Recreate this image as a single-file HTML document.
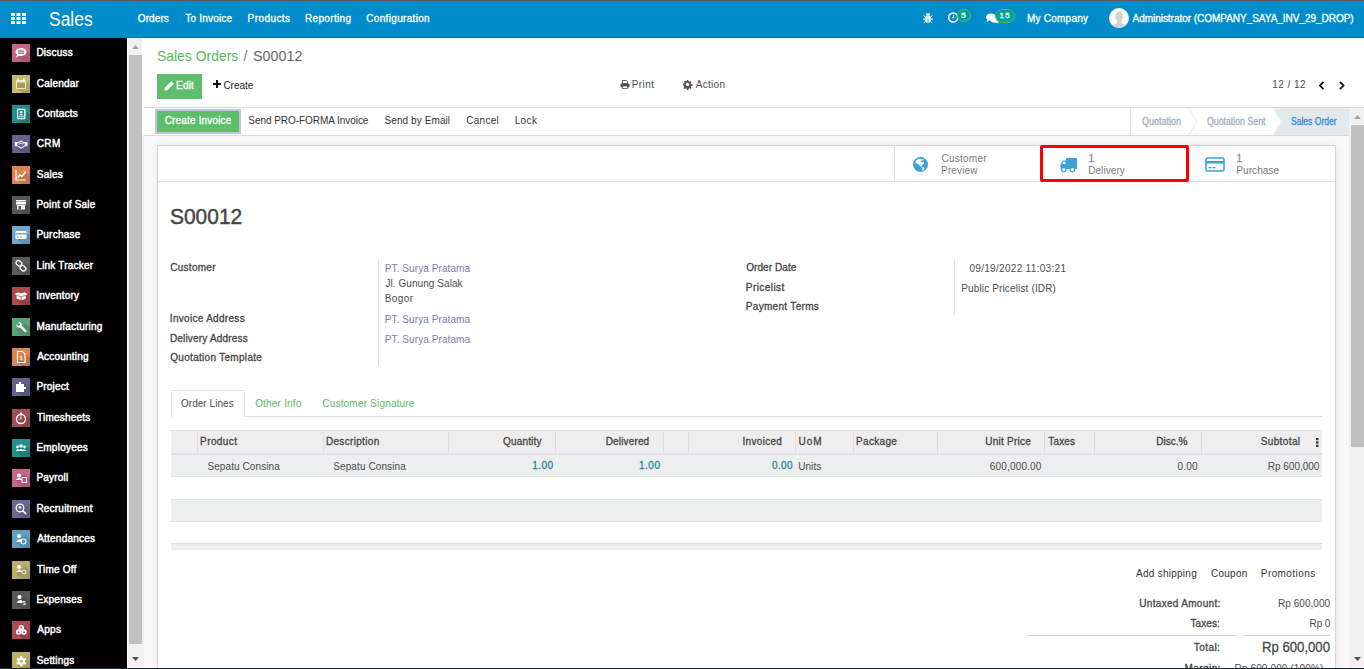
<!DOCTYPE html><html><head><meta charset="utf-8"><style>
*{margin:0;padding:0;box-sizing:border-box}
html,body{width:1364px;height:669px;overflow:hidden;background:#f9f9f9;font-family:"Liberation Sans",sans-serif}
.t{position:absolute;white-space:nowrap;line-height:1}
.r{position:absolute}
svg{position:absolute;overflow:visible}
</style></head><body>
<div class="r" style="left:0px;top:0px;width:1364px;height:1px;background:#5b5b5b;"></div>
<div class="r" style="left:0px;top:1px;width:1364px;height:36px;background:#008ccb;"></div>
<div class="r" style="left:0px;top:37px;width:1364px;height:1px;background:#5a5396;"></div>
<div class="r" style="left:0px;top:38px;width:127px;height:631px;background:#000;"></div>
<div class="r" style="left:127px;top:38px;width:1px;height:631px;background:#fafafa;"></div>
<div class="r" style="left:128px;top:38px;width:16px;height:631px;background:#f1f1f1;"></div>
<div class="r" style="left:129px;top:55px;width:13px;height:589px;background:#c1c1c1;"></div>
<svg style="left:131px;top:44px" width="9" height="6"><path d="M1 5 L4.5 1 L8 5 Z" fill="#a3a3a3"/></svg>
<svg style="left:131px;top:656px" width="9" height="6"><path d="M1 1 L4.5 5 L8 1 Z" fill="#505050"/></svg>
<div class="r" style="left:142px;top:38px;width:1222px;height:70px;background:#fff;"></div>
<div class="r" style="left:144px;top:107px;width:1220px;height:1px;background:#d9d9d9;"></div>
<div class="r" style="left:142px;top:108px;width:1207px;height:27px;background:#fff;"></div>
<div class="r" style="left:144px;top:135px;width:1205px;height:1px;background:#d4dbe3;"></div>
<div class="r" style="left:1349px;top:108px;width:15px;height:560px;background:#f1f1f1;"></div>
<div class="r" style="left:1351px;top:125px;width:13px;height:322px;background:#c1c1c1;"></div>
<svg style="left:1353px;top:114px" width="9" height="6"><path d="M1 5 L4.5 1 L8 5 Z" fill="#a3a3a3"/></svg>
<svg style="left:1353px;top:656px" width="9" height="6"><path d="M1 1 L4.5 5 L8 1 Z" fill="#505050"/></svg>
<svg style="left:11px;top:13px" width="15" height="11"><rect x="0.0" y="0" width="4" height="3" fill="#fff"/><rect x="5.5" y="0" width="4" height="3" fill="#fff"/><rect x="11.0" y="0" width="4" height="3" fill="#fff"/><rect x="0.0" y="4" width="4" height="3" fill="#fff"/><rect x="5.5" y="4" width="4" height="3" fill="#fff"/><rect x="11.0" y="4" width="4" height="3" fill="#fff"/><rect x="0.0" y="8" width="4" height="3" fill="#fff"/><rect x="5.5" y="8" width="4" height="3" fill="#fff"/><rect x="11.0" y="8" width="4" height="3" fill="#fff"/></svg>
<div class="t" style="left:49.20px;top:10.00px;font-size:19.5px;color:#fff;transform:scaleX(0.8941);transform-origin:0 0;">Sales</div>
<div class="t" style="left:137.75px;top:14.00px;font-size:10px;color:#fff;letter-spacing:0.110px;-webkit-text-stroke:0.3px #fff;">Orders</div>
<div class="t" style="left:185.30px;top:14.00px;font-size:10px;color:#fff;letter-spacing:0.200px;-webkit-text-stroke:0.3px #fff;">To Invoice</div>
<div class="t" style="left:247.60px;top:14.00px;font-size:10px;color:#fff;letter-spacing:0.429px;-webkit-text-stroke:0.3px #fff;">Products</div>
<div class="t" style="left:305.00px;top:14.00px;font-size:10px;color:#fff;letter-spacing:0.331px;-webkit-text-stroke:0.3px #fff;">Reporting</div>
<div class="t" style="left:366.30px;top:14.00px;font-size:10px;color:#fff;letter-spacing:0.321px;-webkit-text-stroke:0.3px #fff;">Configuration</div>
<svg style="left:923px;top:13px" width="10" height="10" viewBox="0 0 10 10"><g fill="#fff"><rect x="3" y="0.3" width="4" height="2.4" rx="1"/><rect x="2.2" y="3" width="5.6" height="6.5" rx="1.4"/></g><path d="M2.6 4 L0.6 2.4M7.4 4 L9.4 2.4M2.2 6.2H0M7.8 6.2H10M2.6 8.4 L0.8 9.8M7.4 8.4 L9.2 9.8" stroke="#fff" stroke-width="1"/><path d="M5 4.2v4.8" stroke="#008ccb" stroke-width=".7"/></svg>
<svg style="left:948px;top:12px" width="11" height="11" viewBox="0 0 11 11"><circle cx="5.2" cy="5.5" r="4.5" fill="none" stroke="#fff" stroke-width="1.5"/><path d="M5.6 2.8v3H4.2" fill="none" stroke="#fff" stroke-width="1"/></svg>
<div class="r" style="left:957px;top:9px;width:14px;height:13px;border-radius:7px;background:#00a09d;border:1px solid #5cb85c"></div>
<div class="t" style="left:961.20px;top:12.00px;font-size:8px;color:#fff;-webkit-text-stroke:0.3px #fff;">5</div>
<svg style="left:986px;top:12.5px" width="14" height="11" viewBox="0 0 14 11"><ellipse cx="5" cy="4" rx="5" ry="3.6" fill="#fff"/><path d="M1.5 6 L0.5 9 L4 7 Z" fill="#fff"/><ellipse cx="9" cy="6.5" rx="4.5" ry="3.2" fill="#fff"/><path d="M11.5 8.5 L13 10.5 L9.5 9 Z" fill="#fff"/></svg>
<div class="r" style="left:995px;top:9px;width:20px;height:14px;border-radius:7px;background:#00a09d;border:1px solid #5cb85c"></div>
<div class="t" style="left:999.40px;top:12.00px;font-size:8px;color:#fff;letter-spacing:1.500px;-webkit-text-stroke:0.3px #fff;">15</div>
<div class="t" style="left:1026.90px;top:14.00px;font-size:10px;color:#fff;letter-spacing:0.244px;-webkit-text-stroke:0.3px #fff;">My Company</div>
<svg style="left:1109px;top:8px" width="20" height="20" viewBox="0 0 20 20"><circle cx="10" cy="10" r="10" fill="#fcfcfc"/><clipPath id="av"><circle cx="10" cy="10" r="10"/></clipPath><g clip-path="url(#av)" fill="#d3d3d3"><ellipse cx="10.2" cy="8.2" rx="3.9" ry="4.9"/><rect x="8" y="11" width="4.4" height="5"/><ellipse cx="10.2" cy="19.8" rx="7.5" ry="4.6"/></g></svg>
<div class="t" style="left:1132.50px;top:14.00px;font-size:10px;color:#fff;letter-spacing:-0.029px;-webkit-text-stroke:0.3px #fff;">Administrator (COMPANY_SAYA_INV_29_DROP)</div>
<svg style="left:12px;top:44px" width="18" height="18" viewBox="0 0 18 18"><rect width="18" height="18" fill="#c86584"/><path d="M4 12 L10 18 H18 V10 L13 5Z" fill="#000" opacity=".12"/><ellipse cx="9" cy="8" rx="5.5" ry="4" fill="#fff"/><path d="M5 10.5 L4 13.5 L8 11.5Z" fill="#fff"/><rect x="6" y="6.5" width="6" height="1.1" fill="#9a4560"/><rect x="6" y="8.6" width="6" height="1.1" fill="#9a4560"/></svg>
<div class="t" style="left:36.40px;top:48.00px;font-size:10px;color:#fff;letter-spacing:0.226px;-webkit-text-stroke:0.45px #fff;">Discuss</div>
<svg style="left:12px;top:75px" width="18" height="18" viewBox="0 0 18 18"><rect width="18" height="18" fill="#c6b868"/><path d="M4 12 L10 18 H18 V10 L13 5Z" fill="#000" opacity=".12"/><rect x="4" y="5" width="10" height="9" rx="1" fill="#eee8c8"/><rect x="5" y="7.5" width="8" height="5.5" fill="#a89e60"/><rect x="5.5" y="3.5" width="1.5" height="2.5" fill="#fff"/><rect x="11" y="3.5" width="1.5" height="2.5" fill="#fff"/></svg>
<div class="t" style="left:36.70px;top:79.00px;font-size:10px;color:#fff;letter-spacing:0.228px;-webkit-text-stroke:0.45px #fff;">Calendar</div>
<svg style="left:12px;top:105px" width="18" height="18" viewBox="0 0 18 18"><rect width="18" height="18" fill="#21908a"/><path d="M4 12 L10 18 H18 V10 L13 5Z" fill="#000" opacity=".12"/><rect x="5.6" y="4.3" width="7.2" height="9.3" rx=".6" fill="none" stroke="#fff" stroke-width="1.2"/><circle cx="9.2" cy="7.2" r="1.3" fill="#fff"/><path d="M7 10.2 Q9.2 8 11.4 10.2Z" fill="#fff"/><rect x="6.5" y="11.3" width="5.5" height=".9" fill="#fff"/><path d="M13.3 6h.9M13.3 8h.9M13.3 10h.9" stroke="#fff" stroke-width=".7"/></svg>
<div class="t" style="left:36.70px;top:109.00px;font-size:10px;color:#fff;letter-spacing:0.221px;-webkit-text-stroke:0.45px #fff;">Contacts</div>
<svg style="left:12px;top:135px" width="18" height="18" viewBox="0 0 18 18"><rect width="18" height="18" fill="#64638f"/><path d="M4 12 L10 18 H18 V10 L13 5Z" fill="#000" opacity=".12"/><path d="M2.8 7h3.4l2.9-1.6 2.9 1.6h3.4v4.2h-2.3l-4 2.5-4-2.5H2.8z" fill="#fff"/><path d="M5.4 8.2l3.7-1.6 3.7 1.6v2.2l-3.7 2.2-3.7-2.2z" fill="#64638f"/><path d="M6.8 9.2l2.2-1.4 1.4 1.2 1.5-.9" stroke="#fff" stroke-width=".9" fill="none"/></svg>
<div class="t" style="left:36.70px;top:139.00px;font-size:10px;color:#fff;letter-spacing:0.429px;-webkit-text-stroke:0.45px #fff;">CRM</div>
<svg style="left:12px;top:166px" width="18" height="18" viewBox="0 0 18 18"><rect width="18" height="18" fill="#df8451"/><path d="M4 12 L10 18 H18 V10 L13 5Z" fill="#000" opacity=".12"/><path d="M4 4v10h10" stroke="#fff" stroke-width="1.2" fill="none"/><path d="M5.5 12 L8 9 L10 10.5 L13 6.5" stroke="#fff" stroke-width="1.5" fill="none"/><path d="M11.5 5.5h2.5v2.5Z" fill="#fff"/></svg>
<div class="t" style="left:36.75px;top:170.00px;font-size:10px;color:#fff;letter-spacing:0.242px;-webkit-text-stroke:0.45px #fff;">Sales</div>
<svg style="left:12px;top:196px" width="18" height="18" viewBox="0 0 18 18"><rect width="18" height="18" fill="#575757"/><path d="M4 12 L10 18 H18 V10 L13 5Z" fill="#000" opacity=".12"/><rect x="4" y="4" width="10" height="1.5" fill="#fff"/><path d="M4 6h10v2.5H4z" fill="#fff"/><rect x="5" y="9" width="8" height="4.5" fill="#fff"/><rect x="6.5" y="10" width="2.5" height="3.5" fill="#575757"/></svg>
<div class="t" style="left:36.40px;top:200.00px;font-size:10px;color:#fff;letter-spacing:0.185px;-webkit-text-stroke:0.45px #fff;">Point of Sale</div>
<svg style="left:12px;top:226px" width="18" height="18" viewBox="0 0 18 18"><rect width="18" height="18" fill="#6ea8cc"/><path d="M4 12 L10 18 H18 V10 L13 5Z" fill="#000" opacity=".12"/><rect x="3.5" y="5" width="11" height="8" rx="1" fill="#fff"/><rect x="3.5" y="7" width="11" height="1.5" fill="#6ea8cc"/><rect x="5" y="10.5" width="2" height="1" fill="#6ea8cc"/><rect x="8" y="10.5" width="2" height="1" fill="#6ea8cc"/></svg>
<div class="t" style="left:36.40px;top:230.00px;font-size:10px;color:#fff;letter-spacing:0.235px;-webkit-text-stroke:0.45px #fff;">Purchase</div>
<svg style="left:12px;top:257px" width="18" height="18" viewBox="0 0 18 18"><rect width="18" height="18" fill="#5a5a5a"/><path d="M4 12 L10 18 H18 V10 L13 5Z" fill="#000" opacity=".12"/><rect x="4" y="4" width="6" height="4.5" rx="2.2" transform="rotate(40 7 6.2)" fill="none" stroke="#fff" stroke-width="1.3"/><rect x="8" y="9" width="6" height="4.5" rx="2.2" transform="rotate(40 11 11.2)" fill="none" stroke="#fff" stroke-width="1.3"/></svg>
<div class="t" style="left:36.40px;top:261.00px;font-size:10px;color:#fff;letter-spacing:0.195px;-webkit-text-stroke:0.45px #fff;">Link Tracker</div>
<svg style="left:12px;top:287px" width="18" height="18" viewBox="0 0 18 18"><rect width="18" height="18" fill="#a84b4e"/><path d="M4 12 L10 18 H18 V10 L13 5Z" fill="#000" opacity=".12"/><path d="M2.8 7 L6 5.2 L9.2 6.6 L12.4 5.2 L15.5 7 L13.8 8.4 V11.8 L9.2 13.3 L4.6 11.8 V8.4Z" fill="#fff"/><path d="M4.6 8.4 L9.2 9.6 L13.8 8.4" stroke="#a84b4e" stroke-width=".8" fill="none"/><path d="M9.2 9.6 V13.3" stroke="#a84b4e" stroke-width=".8"/></svg>
<div class="t" style="left:36.30px;top:291.00px;font-size:10px;color:#fff;letter-spacing:0.201px;-webkit-text-stroke:0.45px #fff;">Inventory</div>
<svg style="left:12px;top:318px" width="18" height="18" viewBox="0 0 18 18"><rect width="18" height="18" fill="#5aa27a"/><path d="M4 12 L10 18 H18 V10 L13 5Z" fill="#000" opacity=".12"/><path d="M4.2 6.2 A3.2 3.2 0 0 0 8.2 9.6 L12.6 14 Q13.6 14.6 14.3 13.8 Q14.8 13 14.2 12.3 L9.8 7.8 A3.2 3.2 0 0 0 6.2 4.1 L7.9 5.9 L7.6 7.6 L5.9 7.9Z" fill="#fff"/></svg>
<div class="t" style="left:36.40px;top:322.00px;font-size:10px;color:#fff;letter-spacing:0.207px;-webkit-text-stroke:0.45px #fff;">Manufacturing</div>
<svg style="left:12px;top:348px" width="18" height="18" viewBox="0 0 18 18"><rect width="18" height="18" fill="#db8552"/><path d="M4 12 L10 18 H18 V10 L13 5Z" fill="#000" opacity=".12"/><path d="M5.5 3.5h5l2.5 2.5v8.5h-7.5z" fill="none" stroke="#fff" stroke-width="1.2"/><text x="9.2" y="12.3" font-size="6" fill="#fff" text-anchor="middle" font-family="Liberation Sans">$</text></svg>
<div class="t" style="left:37.20px;top:352.00px;font-size:10px;color:#fff;letter-spacing:0.217px;-webkit-text-stroke:0.45px #fff;">Accounting</div>
<svg style="left:12px;top:378px" width="18" height="18" viewBox="0 0 18 18"><rect width="18" height="18" fill="#62618d"/><path d="M4 12 L10 18 H18 V10 L13 5Z" fill="#000" opacity=".12"/><path d="M4 6h3V4h2v2h3v3h2v2h-2v3H4z" fill="#fff"/></svg>
<div class="t" style="left:36.40px;top:382.00px;font-size:10px;color:#fff;letter-spacing:0.202px;-webkit-text-stroke:0.45px #fff;">Project</div>
<svg style="left:12px;top:409px" width="18" height="18" viewBox="0 0 18 18"><rect width="18" height="18" fill="#9f4f53"/><path d="M4 12 L10 18 H18 V10 L13 5Z" fill="#000" opacity=".12"/><circle cx="9" cy="10" r="4.5" fill="none" stroke="#fff" stroke-width="1.4"/><rect x="8" y="3.5" width="2" height="1.5" fill="#fff"/><path d="M9 10V7.5M9 10h-1.5" stroke="#fff" stroke-width="1"/></svg>
<div class="t" style="left:37.00px;top:413.00px;font-size:10px;color:#fff;letter-spacing:0.226px;-webkit-text-stroke:0.45px #fff;">Timesheets</div>
<svg style="left:12px;top:439px" width="18" height="18" viewBox="0 0 18 18"><rect width="18" height="18" fill="#21928e"/><path d="M4 12 L10 18 H18 V10 L13 5Z" fill="#000" opacity=".12"/><circle cx="9" cy="7" r="1.8" fill="#fff"/><circle cx="5.5" cy="8" r="1.4" fill="#fff"/><circle cx="12.5" cy="8" r="1.4" fill="#fff"/><path d="M3.5 12 Q5.5 9 7.5 11 Q9 8.5 10.5 11 Q12.5 9 14.5 12Z" fill="#fff"/></svg>
<div class="t" style="left:36.40px;top:443.00px;font-size:10px;color:#fff;letter-spacing:0.242px;-webkit-text-stroke:0.45px #fff;">Employees</div>
<svg style="left:12px;top:469px" width="18" height="18" viewBox="0 0 18 18"><rect width="18" height="18" fill="#c8658a"/><path d="M4 12 L10 18 H18 V10 L13 5Z" fill="#000" opacity=".12"/><circle cx="7" cy="6.5" r="2" fill="#fff"/><path d="M3.5 11 Q7 7.5 10 10 V11Z" fill="#fff"/><rect x="10" y="8.5" width="4.5" height="5" fill="none" stroke="#fff" stroke-width="1"/></svg>
<div class="t" style="left:36.40px;top:473.00px;font-size:10px;color:#fff;letter-spacing:0.194px;-webkit-text-stroke:0.45px #fff;">Payroll</div>
<svg style="left:12px;top:500px" width="18" height="18" viewBox="0 0 18 18"><rect width="18" height="18" fill="#6a6992"/><path d="M4 12 L10 18 H18 V10 L13 5Z" fill="#000" opacity=".12"/><circle cx="8" cy="8" r="3.8" fill="none" stroke="#fff" stroke-width="1.3"/><circle cx="8" cy="7.5" r="1.3" fill="#fff"/><path d="M10.5 10.5 L14 14" stroke="#fff" stroke-width="1.6"/></svg>
<div class="t" style="left:36.40px;top:504.00px;font-size:10px;color:#fff;letter-spacing:0.212px;-webkit-text-stroke:0.45px #fff;">Recruitment</div>
<svg style="left:12px;top:530px" width="18" height="18" viewBox="0 0 18 18"><rect width="18" height="18" fill="#5f9fc2"/><path d="M4 12 L10 18 H18 V10 L13 5Z" fill="#000" opacity=".12"/><circle cx="7" cy="6" r="2" fill="#fff"/><path d="M4 12 Q7 7.5 10 10 V12Z" fill="#fff"/><circle cx="11.5" cy="11.5" r="2.5" fill="none" stroke="#fff" stroke-width="1.1"/></svg>
<div class="t" style="left:37.20px;top:534.00px;font-size:10px;color:#fff;letter-spacing:0.221px;-webkit-text-stroke:0.45px #fff;">Attendances</div>
<svg style="left:12px;top:561px" width="18" height="18" viewBox="0 0 18 18"><rect width="18" height="18" fill="#b8ad6c"/><path d="M4 12 L10 18 H18 V10 L13 5Z" fill="#000" opacity=".12"/><circle cx="7" cy="6" r="2" fill="#fff"/><path d="M4 11 Q7 7.5 10 10 V11Z" fill="#fff"/><circle cx="12" cy="11" r="2" fill="none" stroke="#eee" stroke-width="1"/></svg>
<div class="t" style="left:37.00px;top:565.00px;font-size:10px;color:#fff;letter-spacing:0.215px;-webkit-text-stroke:0.45px #fff;">Time Off</div>
<svg style="left:12px;top:591px" width="18" height="18" viewBox="0 0 18 18"><rect width="18" height="18" fill="#595959"/><path d="M4 12 L10 18 H18 V10 L13 5Z" fill="#000" opacity=".12"/><circle cx="7.5" cy="6" r="2" fill="#fff"/><path d="M4.5 12 Q7.5 7.5 10.5 10 V12Z" fill="#fff"/><text x="12.2" y="14" font-size="6" fill="#fff" text-anchor="middle" font-family="Liberation Sans">$</text></svg>
<div class="t" style="left:36.40px;top:595.00px;font-size:10px;color:#fff;letter-spacing:0.244px;-webkit-text-stroke:0.45px #fff;">Expenses</div>
<svg style="left:12px;top:621px" width="18" height="18" viewBox="0 0 18 18"><rect width="18" height="18" fill="#ac4b50"/><path d="M4 12 L10 18 H18 V10 L13 5Z" fill="#000" opacity=".12"/><circle cx="9.3" cy="6.6" r="2.7" fill="#fff"/><circle cx="6.6" cy="11" r="2.7" fill="#fff"/><circle cx="12" cy="11" r="2.7" fill="#fff"/><circle cx="9.3" cy="6.6" r="1" fill="#ac4b50"/><circle cx="6.6" cy="11.2" r="1" fill="#ac4b50"/><circle cx="12" cy="11.2" r="1" fill="#ac4b50"/></svg>
<div class="t" style="left:37.20px;top:625.00px;font-size:10px;color:#fff;letter-spacing:0.299px;-webkit-text-stroke:0.45px #fff;">Apps</div>
<svg style="left:12px;top:652px" width="18" height="18" viewBox="0 0 18 18"><rect width="18" height="18" fill="#bfb061"/><path d="M4 12 L10 18 H18 V10 L13 5Z" fill="#000" opacity=".12"/><g fill="#fff"><circle cx="9.3" cy="9.3" r="3.6"/><rect x="8.2" y="4" width="2.2" height="10.6" rx=".5"/><rect x="8.2" y="4" width="2.2" height="10.6" rx=".5" transform="rotate(60 9.3 9.3)"/><rect x="8.2" y="4" width="2.2" height="10.6" rx=".5" transform="rotate(120 9.3 9.3)"/></g><circle cx="9.3" cy="9.3" r="1.5" fill="#bfb061"/></svg>
<div class="t" style="left:36.75px;top:656.00px;font-size:10px;color:#fff;letter-spacing:0.202px;-webkit-text-stroke:0.45px #fff;">Settings</div>
<div class="t" style="left:156.68px;top:49.00px;font-size:14.5px;color:#5cb85c;transform:scaleX(0.9599);transform-origin:0 0;">Sales Orders</div>
<div class="t" style="left:243.50px;top:49.00px;font-size:14.5px;color:#777;">/</div>
<div class="t" style="left:253.16px;top:49.00px;font-size:14.5px;color:#666;transform:scaleX(0.9908);transform-origin:0 0;">S00012</div>
<div class="r" style="left:157px;top:74px;width:45px;height:25px;background:#5dbe6b;"></div>
<svg style="left:164px;top:80.5px" width="10" height="10" viewBox="0 0 10 10"><path d="M0.3 9.6 L0.6 6.9 L7.3 0.2 L9.8 2.7 L3.1 9.3Z" fill="#fff"/></svg>
<div class="t" style="left:176.00px;top:81.00px;font-size:10px;color:#fff;letter-spacing:0.217px;-webkit-text-stroke:0.3px #fff;">Edit</div>
<svg style="left:213px;top:80px" width="8" height="8"><path d="M3 0h2v3h3v2H5v3H3V5H0V3h3z" fill="#111"/></svg>
<div class="t" style="left:223.40px;top:81.00px;font-size:10px;color:#222;letter-spacing:-0.020px;">Create</div>
<svg style="left:619.5px;top:80px" width="10" height="9" viewBox="0 0 10 9"><path d="M2.5 0.5h4l1 1v2h-5z" fill="none" stroke="#555" stroke-width=".9"/><rect x="0.5" y="3.5" width="9" height="4" rx="1" fill="#555"/><rect x="2.5" y="6" width="5" height="2.5" fill="#fff" stroke="#555" stroke-width=".8"/></svg>
<div class="t" style="left:631.70px;top:80.00px;font-size:10px;color:#4c4c4c;letter-spacing:0.450px;">Print</div>
<svg style="left:683px;top:80px" width="9" height="9" viewBox="0 0 18 18"><path fill="#555" d="M7.5 0h3l.5 2.5 2 .8 2.1-1.5 2.1 2.1-1.5 2.1.8 2 2.5.5v3l-2.5.5-.8 2 1.5 2.1-2.1 2.1-2.1-1.5-2 .8-.5 2.5h-3l-.5-2.5-2-.8-2.1 1.5-2.1-2.1 1.5-2.1-.8-2L0 10.5v-3l2.5-.5.8-2-1.5-2.1 2.1-2.1 2.1 1.5 2-.8zM9 5.5a3.5 3.5 0 1 0 0 7 3.5 3.5 0 1 0 0-7z"/></svg>
<div class="t" style="left:695.70px;top:80.00px;font-size:10px;color:#4c4c4c;letter-spacing:0.300px;">Action</div>
<div class="t" style="left:1272.25px;top:80.00px;font-size:10px;color:#4c4c4c;letter-spacing:0.450px;">12 / 12</div>
<svg style="left:1318px;top:81px" width="7" height="9"><path d="M5.5 0.8 L2 4.5 L5.5 8.2" fill="none" stroke="#111" stroke-width="1.8"/></svg>
<svg style="left:1339px;top:81px" width="7" height="9"><path d="M1 0.8 L4.5 4.5 L1 8.2" fill="none" stroke="#111" stroke-width="1.8"/></svg>
<div class="r" style="left:155px;top:109px;width:86px;height:25px;background:#c6c2e0;"></div>
<div class="r" style="left:157px;top:111px;width:82px;height:21px;background:#5dbe6b;"></div>
<div class="t" style="left:164.70px;top:116.00px;font-size:10px;color:#fff;letter-spacing:0.165px;-webkit-text-stroke:0.3px #fff;">Create Invoice</div>
<div class="t" style="left:248.35px;top:116.00px;font-size:10px;color:#333;letter-spacing:-0.052px;">Send PRO-FORMA Invoice</div>
<div class="t" style="left:384.55px;top:116.00px;font-size:10px;color:#333;letter-spacing:0.087px;">Send by Email</div>
<div class="t" style="left:466.30px;top:116.00px;font-size:10px;color:#333;letter-spacing:0.270px;">Cancel</div>
<div class="t" style="left:514.70px;top:116.00px;font-size:10px;color:#333;letter-spacing:0.367px;">Lock</div>
<div class="r" style="left:1130px;top:108px;width:1px;height:27px;background:#dee2e6;"></div>
<svg style="left:1189px;top:108px" width="9" height="27"><path d="M0 0 L8 13.5 L0 27" fill="none" stroke="#e6e9ec" stroke-width="1"/></svg>
<svg style="left:1273px;top:108px" width="76" height="27"><path d="M0 0 H76 V27 H0 L8 13.5Z" fill="#e3e8ec"/></svg>
<div class="t" style="left:1142.49px;top:117.00px;font-size:10px;color:#a3afba;transform:scaleX(0.9007);transform-origin:0 0;-webkit-text-stroke:0.3px #a3afba;">Quotation</div>
<div class="t" style="left:1206.61px;top:117.00px;font-size:10px;color:#a3afba;transform:scaleX(0.8761);transform-origin:0 0;-webkit-text-stroke:0.3px #a3afba;">Quotation Sent</div>
<div class="t" style="left:1291.02px;top:117.00px;font-size:10px;color:#2d8fd5;transform:scaleX(0.8542);transform-origin:0 0;-webkit-text-stroke:0.3px #2d8fd5;">Sales Order</div>
<div class="r" style="left:157px;top:145px;width:1179px;height:600px;background:#fff;border:1px solid #d6d6d6;box-shadow:0 0 8px rgba(0,0,0,.08)"></div>
<div class="r" style="left:158px;top:181px;width:1177px;height:1px;background:#dee2e6;"></div>
<div class="r" style="left:894px;top:146px;width:1px;height:35px;background:#dee2e6;"></div>
<div class="r" style="left:1041px;top:146px;width:1px;height:35px;background:#dee2e6;"></div>
<div class="r" style="left:1188px;top:146px;width:1px;height:35px;background:#dee2e6;"></div>
<svg style="left:913px;top:157px" width="15" height="15" viewBox="0 0 16 16"><circle cx="8" cy="8" r="8" fill="#3aa2d6"/><path d="M2.6 4.2 Q5 1.6 8.6 2.1 L9.6 3.4 L8.4 4.6 L9.9 5.6 L11.9 4.7 L11.6 7.1 L9.9 8.3 L8.6 10.6 L7.3 9.6 L6.6 7.9 L4.6 7.1 L2.9 6.6Z" fill="#fff"/><path d="M9 10.9 L11.9 11.1 L12.7 12.4 L10.4 14.6Z" fill="#fff"/><circle cx="10.3" cy="3" r=".8" fill="#fff"/></svg>
<div class="t" style="left:941.40px;top:154.00px;font-size:10px;color:#7a7a7a;letter-spacing:0.271px;">Customer</div>
<div class="t" style="left:941.10px;top:166.00px;font-size:10px;color:#7a7a7a;letter-spacing:0.133px;">Preview</div>
<svg style="left:1060px;top:158px" width="17" height="14" viewBox="0 0 17 14"><path d="M6 0h11v11H6z" fill="#3aa2d6"/><path d="M0.5 6 L3 2.5 H7 V11 H0.5Z" fill="#3aa2d6"/><path d="M2 6 L3.5 3.8 H5.5 V6Z" fill="#fff"/><circle cx="3.8" cy="11.5" r="2.2" fill="#fff" stroke="#3aa2d6" stroke-width="1.3"/><circle cx="12.5" cy="11.5" r="2.2" fill="#fff" stroke="#3aa2d6" stroke-width="1.3"/></svg>
<div class="t" style="left:1088.45px;top:154.00px;font-size:10px;color:#8a89bb;-webkit-text-stroke:0.3px #8a89bb;">1</div>
<div class="t" style="left:1088.20px;top:166.00px;font-size:10px;color:#7a7a7a;letter-spacing:0.071px;">Delivery</div>
<svg style="left:1205px;top:157px" width="20" height="15" viewBox="0 0 20 15"><rect x="1" y="1" width="18" height="13" rx="1.5" fill="none" stroke="#3aa2d6" stroke-width="1.6"/><rect x="1" y="4" width="18" height="2.5" fill="#3aa2d6"/><rect x="3.5" y="10" width="3" height="1.3" fill="#3aa2d6"/><rect x="7.5" y="10" width="3" height="1.3" fill="#3aa2d6"/></svg>
<div class="t" style="left:1236.45px;top:154.00px;font-size:10px;color:#8a89bb;-webkit-text-stroke:0.3px #8a89bb;">1</div>
<div class="t" style="left:1236.20px;top:166.00px;font-size:10px;color:#7a7a7a;letter-spacing:0.107px;">Purchase</div>
<div class="r" style="left:1040px;top:145px;width:149px;height:37px;border:3px solid #f00;border-radius:2px"></div>
<div class="t" style="left:169.75px;top:206.00px;font-size:22px;color:#454545;transform:scaleX(0.9519);transform-origin:0 0;-webkit-text-stroke:0.45px #454545;">S00012</div>
<div class="t" style="left:170.20px;top:263.00px;font-size:10px;color:#444;letter-spacing:0.286px;-webkit-text-stroke:0.3px #444;">Customer</div>
<div class="t" style="left:169.80px;top:314.00px;font-size:10px;color:#444;letter-spacing:0.304px;-webkit-text-stroke:0.3px #444;">Invoice Address</div>
<div class="t" style="left:169.90px;top:334.00px;font-size:10px;color:#444;letter-spacing:0.187px;-webkit-text-stroke:0.3px #444;">Delivery Address</div>
<div class="t" style="left:170.25px;top:353.00px;font-size:10px;color:#444;letter-spacing:0.300px;-webkit-text-stroke:0.3px #444;">Quotation Template</div>
<div class="t" style="left:746.15px;top:263.00px;font-size:10px;color:#444;letter-spacing:0.078px;-webkit-text-stroke:0.3px #444;">Order Date</div>
<div class="t" style="left:745.80px;top:283.00px;font-size:10px;color:#444;letter-spacing:0.431px;-webkit-text-stroke:0.3px #444;">Pricelist</div>
<div class="t" style="left:745.80px;top:302.00px;font-size:10px;color:#444;letter-spacing:0.312px;-webkit-text-stroke:0.3px #444;">Payment Terms</div>
<div class="r" style="left:378px;top:260px;width:1px;height:106px;background:#dcdcdc;"></div>
<div class="r" style="left:954px;top:260px;width:1px;height:55px;background:#dcdcdc;"></div>
<div class="t" style="left:384.80px;top:264.00px;font-size:10px;color:#7c7bad;letter-spacing:0.081px;">PT. Surya Pratama</div>
<div class="t" style="left:385.45px;top:279.00px;font-size:10px;color:#4c4c4c;letter-spacing:0.067px;">Jl. Gunung Salak</div>
<div class="t" style="left:384.80px;top:294.00px;font-size:10px;color:#4c4c4c;letter-spacing:0.387px;">Bogor</div>
<div class="t" style="left:384.80px;top:315.00px;font-size:10px;color:#7c7bad;letter-spacing:0.081px;">PT. Surya Pratama</div>
<div class="t" style="left:384.80px;top:335.00px;font-size:10px;color:#7c7bad;letter-spacing:0.081px;">PT. Surya Pratama</div>
<div class="t" style="left:969.40px;top:264.00px;font-size:10px;color:#4c4c4c;letter-spacing:0.308px;">09/19/2022 11:03:21</div>
<div class="t" style="left:961.20px;top:284.00px;font-size:10px;color:#4c4c4c;letter-spacing:0.145px;">Public Pricelist (IDR)</div>
<div class="r" style="left:171px;top:416px;width:1151px;height:1px;background:#dee2e6;"></div>
<div class="r" style="left:171px;top:390px;width:74px;height:27px;background:#fff;border:1px solid #dee2e6;border-bottom:none;border-radius:2px 2px 0 0"></div>
<div class="t" style="left:180.95px;top:399.00px;font-size:10px;color:#4c4c4c;letter-spacing:0.045px;">Order Lines</div>
<div class="t" style="left:255.15px;top:399.00px;font-size:10px;color:#5cb85c;letter-spacing:0.200px;">Other Info</div>
<div class="t" style="left:322.30px;top:399.00px;font-size:10px;color:#5cb85c;letter-spacing:0.188px;">Customer Signature</div>
<div class="r" style="left:171px;top:430px;width:1151px;height:1px;background:#dee2e6;"></div>
<div class="r" style="left:171px;top:431px;width:1151px;height:22px;background:#eeeeee;"></div>
<div class="r" style="left:171px;top:453px;width:1151px;height:2px;background:#dee2e6;"></div>
<div class="r" style="left:197px;top:431px;width:1px;height:22px;background:#dcdcdc;"></div>
<div class="r" style="left:323px;top:431px;width:1px;height:22px;background:#dcdcdc;"></div>
<div class="r" style="left:448px;top:431px;width:1px;height:22px;background:#dcdcdc;"></div>
<div class="r" style="left:555px;top:431px;width:1px;height:22px;background:#dcdcdc;"></div>
<div class="r" style="left:663px;top:431px;width:1px;height:22px;background:#dcdcdc;"></div>
<div class="r" style="left:688px;top:431px;width:1px;height:22px;background:#dcdcdc;"></div>
<div class="r" style="left:795px;top:431px;width:1px;height:22px;background:#dcdcdc;"></div>
<div class="r" style="left:853px;top:431px;width:1px;height:22px;background:#dcdcdc;"></div>
<div class="r" style="left:937px;top:431px;width:1px;height:22px;background:#dcdcdc;"></div>
<div class="r" style="left:1044px;top:431px;width:1px;height:22px;background:#dcdcdc;"></div>
<div class="r" style="left:1094px;top:431px;width:1px;height:22px;background:#dcdcdc;"></div>
<div class="r" style="left:1201px;top:431px;width:1px;height:22px;background:#dcdcdc;"></div>
<div class="t" style="left:200.10px;top:437.00px;font-size:10px;color:#444;letter-spacing:0.400px;-webkit-text-stroke:0.3px #444;">Product</div>
<div class="t" style="left:325.90px;top:437.00px;font-size:10px;color:#444;letter-spacing:0.330px;-webkit-text-stroke:0.3px #444;">Description</div>
<div class="t" style="left:503.05px;top:437.00px;font-size:10px;color:#444;letter-spacing:0.157px;-webkit-text-stroke:0.3px #444;">Quantity</div>
<div class="t" style="left:605.70px;top:437.00px;font-size:10px;color:#444;letter-spacing:0.156px;-webkit-text-stroke:0.3px #444;">Delivered</div>
<div class="t" style="left:742.50px;top:437.00px;font-size:10px;color:#444;letter-spacing:0.307px;-webkit-text-stroke:0.3px #444;">Invoiced</div>
<div class="t" style="left:798.55px;top:437.00px;font-size:10px;color:#444;letter-spacing:0.925px;-webkit-text-stroke:0.3px #444;">UoM</div>
<div class="t" style="left:856.10px;top:437.00px;font-size:10px;color:#444;letter-spacing:0.317px;-webkit-text-stroke:0.3px #444;">Package</div>
<div class="t" style="left:985.25px;top:437.00px;font-size:10px;color:#444;letter-spacing:0.256px;-webkit-text-stroke:0.3px #444;">Unit Price</div>
<div class="t" style="left:1048.30px;top:437.00px;font-size:10px;color:#444;letter-spacing:0.163px;-webkit-text-stroke:0.3px #444;">Taxes</div>
<div class="t" style="left:1156.20px;top:437.00px;font-size:10px;color:#444;letter-spacing:0.030px;-webkit-text-stroke:0.3px #444;">Disc.%</div>
<div class="t" style="left:1260.65px;top:437.00px;font-size:10px;color:#444;letter-spacing:0.393px;-webkit-text-stroke:0.3px #444;">Subtotal</div>
<svg style="left:1316px;top:438px" width="3" height="9"><rect x="0" y="0" width="2.5" height="2.2" fill="#333"/><rect x="0" y="3.4" width="2.5" height="2.2" fill="#333"/><rect x="0" y="6.8" width="2.5" height="2.2" fill="#333"/></svg>
<div class="r" style="left:171px;top:455px;width:1151px;height:21px;background:#edeeee;"></div>
<div class="r" style="left:171px;top:476px;width:1151px;height:1px;background:#dee2e6;"></div>
<div class="t" style="left:207.45px;top:462.00px;font-size:10px;color:#4c4c4c;letter-spacing:0.092px;">Sepatu Consina</div>
<div class="t" style="left:333.25px;top:462.00px;font-size:10px;color:#4c4c4c;letter-spacing:0.100px;">Sepatu Consina</div>
<div class="t" style="left:532.15px;top:461.00px;font-size:10px;color:#1a8aa4;letter-spacing:0.450px;-webkit-text-stroke:0.3px #1a8aa4;">1.00</div>
<div class="t" style="left:639.05px;top:461.00px;font-size:10px;color:#1a8aa4;letter-spacing:0.483px;-webkit-text-stroke:0.3px #1a8aa4;">1.00</div>
<div class="t" style="left:771.90px;top:461.00px;font-size:10px;color:#1a8aa4;letter-spacing:0.433px;-webkit-text-stroke:0.3px #1a8aa4;">0.00</div>
<div class="t" style="left:798.15px;top:462.00px;font-size:10px;color:#4c4c4c;letter-spacing:0.100px;">Units</div>
<div class="t" style="left:989.80px;top:462.00px;font-size:10px;color:#4c4c4c;letter-spacing:0.167px;">600,000.00</div>
<div class="t" style="left:1177.40px;top:462.00px;font-size:10px;color:#4c4c4c;letter-spacing:0.267px;">0.00</div>
<div class="t" style="left:1267.80px;top:462.00px;font-size:10px;color:#4c4c4c;letter-spacing:-0.017px;">Rp 600,000</div>
<div class="r" style="left:171px;top:499px;width:1151px;height:1px;background:#dee2e6;"></div>
<div class="r" style="left:171px;top:500px;width:1151px;height:21px;background:#edeeee;"></div>
<div class="r" style="left:171px;top:521px;width:1151px;height:1px;background:#dee2e6;"></div>
<div class="r" style="left:171px;top:543px;width:1151px;height:1px;background:#dee2e6;"></div>
<div class="r" style="left:171px;top:544px;width:1151px;height:6px;background:#edeeee;"></div>
<div class="t" style="left:1136.10px;top:569.00px;font-size:10px;color:#333;letter-spacing:0.255px;">Add shipping</div>
<div class="t" style="left:1211.10px;top:569.00px;font-size:10px;color:#333;letter-spacing:0.220px;">Coupon</div>
<div class="t" style="left:1260.80px;top:569.00px;font-size:10px;color:#333;letter-spacing:0.417px;">Promotions</div>
<div class="t" style="left:1139.35px;top:599.00px;font-size:10px;color:#444;letter-spacing:0.300px;-webkit-text-stroke:0.3px #444;">Untaxed Amount:</div>
<div class="t" style="left:1278.00px;top:599.00px;font-size:10px;color:#4c4c4c;letter-spacing:0.039px;">Rp 600,000</div>
<div class="t" style="left:1190.40px;top:619.00px;font-size:10px;color:#444;letter-spacing:0.120px;-webkit-text-stroke:0.3px #444;">Taxes:</div>
<div class="t" style="left:1309.60px;top:619.00px;font-size:10px;color:#4c4c4c;letter-spacing:-0.117px;">Rp 0</div>
<div class="r" style="left:1028px;top:635px;width:208px;height:1px;background:#cccccc;"></div>
<div class="r" style="left:1244px;top:635px;width:86px;height:1px;background:#cccccc;"></div>
<div class="t" style="left:1193.80px;top:643.00px;font-size:10px;color:#444;letter-spacing:0.440px;-webkit-text-stroke:0.3px #444;">Total:</div>
<div class="t" style="left:1262.25px;top:639.00px;font-size:15px;color:#474747;transform:scaleX(0.8766);transform-origin:0 0;-webkit-text-stroke:0.3px #474747;">Rp 600,000</div>
<div class="t" style="left:1184.60px;top:664.00px;font-size:10px;color:#444;letter-spacing:0.408px;-webkit-text-stroke:0.3px #444;">Margin:</div>
<div class="t" style="left:1234.60px;top:664.00px;font-size:10px;color:#4c4c4c;letter-spacing:0.119px;">Rp 600,000 (100%)</div>
<div class="r" style="left:0px;top:668px;width:1364px;height:1px;background:#1e2a30;"></div>
</body></html>
